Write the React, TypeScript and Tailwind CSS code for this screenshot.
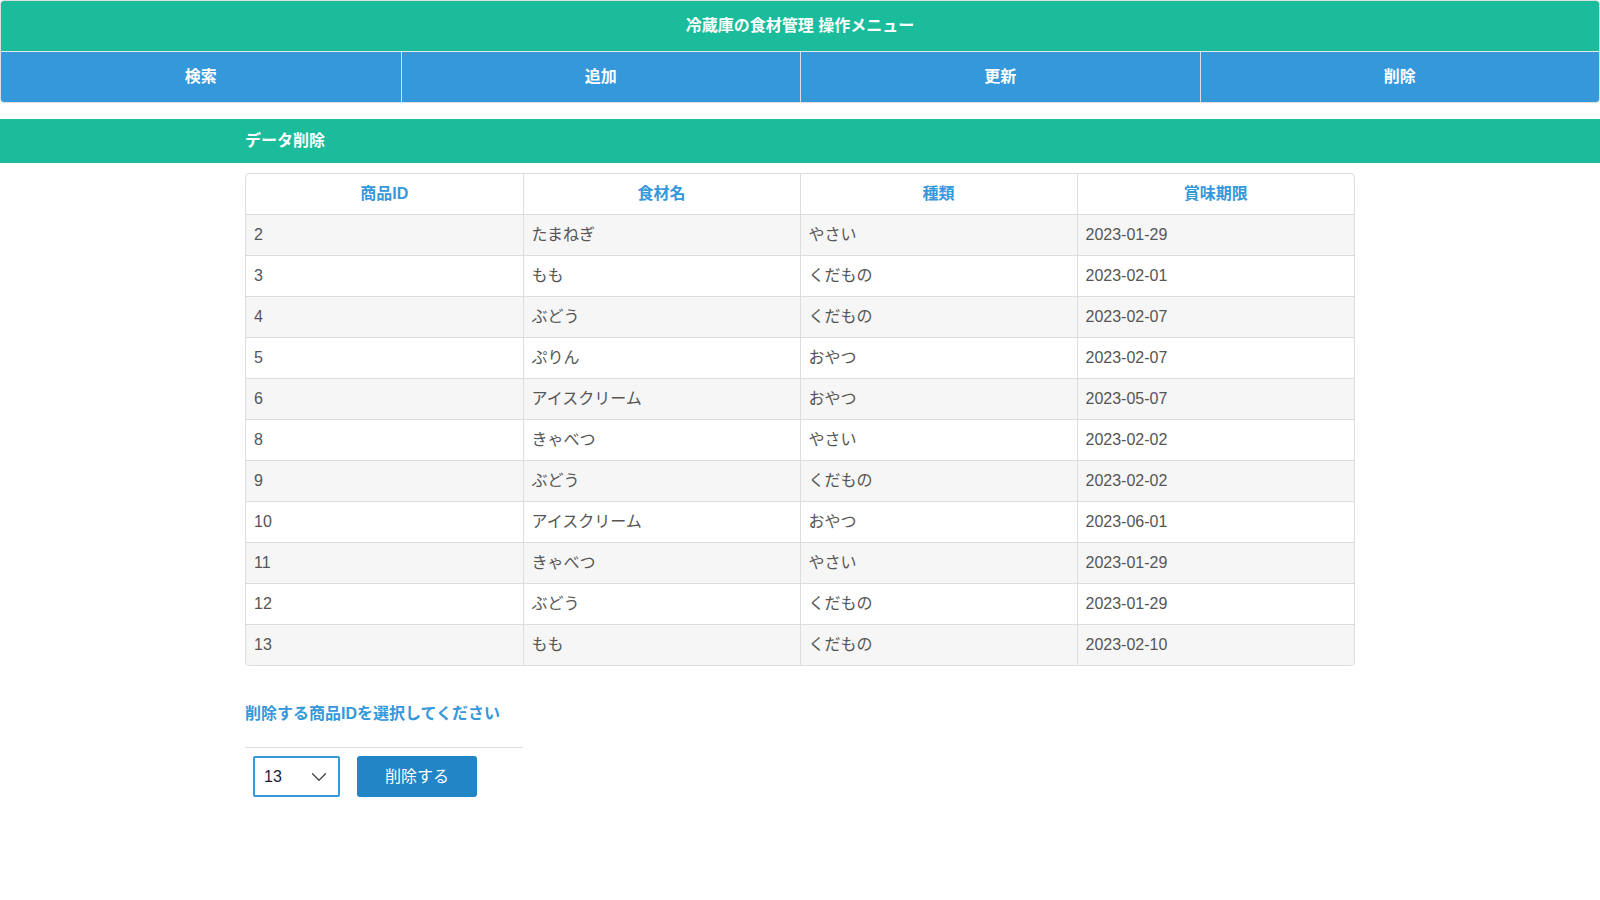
import { ChevronDown } from "lucide-react";

const font = "font-['Liberation_Sans','Noto_Sans_CJK_JP',sans-serif]";

const rows = [
  ["2", "たまねぎ", "やさい", "2023-01-29"],
  ["3", "もも", "くだもの", "2023-02-01"],
  ["4", "ぶどう", "くだもの", "2023-02-07"],
  ["5", "ぷりん", "おやつ", "2023-02-07"],
  ["6", "アイスクリーム", "おやつ", "2023-05-07"],
  ["8", "きゃべつ", "やさい", "2023-02-02"],
  ["9", "ぶどう", "くだもの", "2023-02-02"],
  ["10", "アイスクリーム", "おやつ", "2023-06-01"],
  ["11", "きゃべつ", "やさい", "2023-01-29"],
  ["12", "ぶどう", "くだもの", "2023-01-29"],
  ["13", "もも", "くだもの", "2023-02-10"],
];

const menu = ["検索", "追加", "更新", "削除"];

export default function App() {
  return (
    <main className={`min-h-screen bg-white text-[16px] text-[#555] ${font}`}>
      <header className="border border-[#dddddd] rounded-[4px] overflow-hidden">
        <h1 className="h-[50px] flex items-center justify-center bg-[#1abc9c] text-white font-bold text-[16px]">
          冷蔵庫の食材管理 操作メニュー
        </h1>
        <nav className="grid grid-cols-4 border-t border-[#e8e8e8] bg-[#3498db]">
          {menu.map((m, i) => (
            <a
              key={m}
              className={`h-[50px] flex items-center justify-center text-white font-bold ${i > 0 ? "border-l border-[#dddddd]" : ""}`}
            >
              {m}
            </a>
          ))}
        </nav>
      </header>

      <section className="mt-4 bg-[#1abc9c] h-[44px]">
        <div className="w-[1110px] mx-auto h-full flex items-center">
          <h2 className="text-white font-bold">データ削除</h2>
        </div>
      </section>

      <div className="w-[1110px] mx-auto">
        <div className="mt-[10px] border border-[#dddddd] rounded-[4px] overflow-hidden">
          <table className="w-full table-fixed border-collapse">
            <thead>
              <tr>
                {["商品ID", "食材名", "種類", "賞味期限"].map((h, i) => (
                  <th
                    key={h}
                    className={`h-[40px] text-center text-[#3498db] font-bold ${i > 0 ? "border-l border-[#dddddd]" : ""}`}
                  >
                    {h}
                  </th>
                ))}
              </tr>
            </thead>
            <tbody>
              {rows.map((r, ri) => (
                <tr key={ri} className={`border-t border-[#dddddd] ${ri % 2 === 0 ? "bg-[#f6f6f6]" : "bg-white"}`}>
                  {r.map((c, ci) => (
                    <td
                      key={ci}
                      className={`h-[41px] px-[8px] text-left ${ci > 0 ? "border-l border-[#dddddd]" : ""}`}
                    >
                      {c}
                    </td>
                  ))}
                </tr>
              ))}
            </tbody>
          </table>
        </div>

        <p className="mt-[36px] leading-[24px] text-[#3498db] font-bold">削除する商品IDを選択してください</p>

        <div className="w-[278px] mt-[21px] border-t border-[#dddddd]" />

        <div className="flex items-center gap-[17px] pl-[8px] mt-[8px]">
          <div className="relative w-[87px] h-[41px] border-2 border-[#3498db] rounded-[2px] flex items-center px-[9px] text-[#1b1b3a]">
            13
            <ChevronDown className="absolute right-[6px] w-[26px] h-[26px] text-[#444]" strokeWidth={1.2} />
          </div>
          <button className="w-[120px] h-[41px] rounded-[3px] bg-[#2185c6] text-white">削除する</button>
        </div>
      </div>
    </main>
  );
}
